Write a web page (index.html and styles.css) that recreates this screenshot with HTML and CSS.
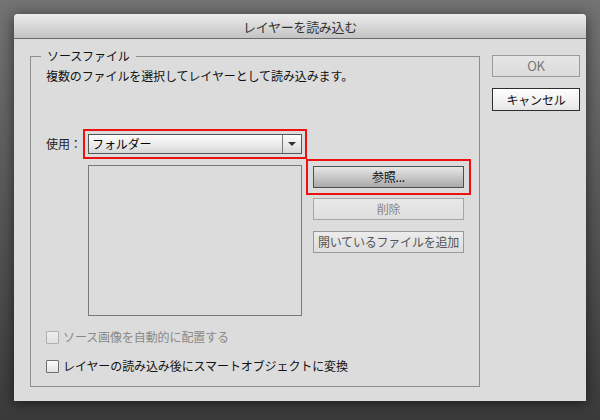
FILE: index.html
```html
<!DOCTYPE html>
<html lang="ja">
<head>
<meta charset="utf-8">
<title>レイヤーを読み込む</title>
<link rel="stylesheet" href="styles.css">
</head>
<body>
<div class="dialog">
  <div class="titlebar">レイヤーを読み込む</div>
  <div class="content">
    <fieldset class="group">
      <legend>ソースファイル</legend>
      <div class="group-body">
        <p class="desc">複数のファイルを選択してレイヤーとして読み込みます。</p>
        <div class="use-row">
          <span class="label">使用：</span>
          <div class="select highlight-sm">
            <span class="select-value">フォルダー</span>
            <span class="select-arrow"><span class="tri"></span></span>
          </div>
        </div>
        <div class="files">
          <div class="filelist"></div>
          <div class="file-buttons">
            <button class="btn btn-strong highlight-lg">参照...</button>
            <button class="btn btn-disabled btn-del">削除</button>
            <button class="btn btn-soft btn-add">開いているファイルを追加</button>
          </div>
        </div>
        <label class="check check-disabled"><span class="box"></span>ソース画像を自動的に配置する</label>
        <label class="check check-second"><span class="box"></span>レイヤーの読み込み後にスマートオブジェクトに変換</label>
      </div>
    </fieldset>
    <div class="actions">
      <button class="btn btn-ok">OK</button>
      <button class="btn btn-cancel">キャンセル</button>
    </div>
  </div>
</div>
</body>
</html>
```

FILE: styles.css
```css
html, body {
  margin: 0;
}
body {
  height: 420px;
  box-sizing: border-box;
  padding: 14px 14px 0;
  overflow: hidden;
  background: linear-gradient(#737373, #3a3a3a);
  font-family: "Noto Sans CJK JP", "Noto Sans", sans-serif;
  font-size: 12px;
  letter-spacing: -0.1px;
  color: #111;
}
.dialog {
  width: 572px;
  height: 387px;
  background: #dcdcdc;
  border-radius: 4px 4px 0 0;
  box-shadow: 0 2px 14px rgba(0, 0, 0, 0.55);
  display: flex;
  flex-direction: column;
}
.titlebar {
  height: 24px;
  line-height: 25px;
  border-bottom: 1px solid #6c6c6c;
  border-radius: 4px 4px 0 0;
  background: linear-gradient(#ececec, #c4c4c4);
  text-align: center;
  font-size: 13px;
  letter-spacing: -0.3px;
  color: #333;
}
.content {
  display: flex;
  align-items: flex-start;
  gap: 12px;
  padding: 9px 6px 0 16px;
}
.group {
  margin: 0;
  padding: 0;
  width: 450px;
  box-sizing: border-box;
  border: 1px solid #8e8e8e;
  min-width: 0;
}
.group legend {
  margin-left: 10px;
  padding: 0 6px;
  line-height: 16px;
  color: #111;
}
.group-body {
  padding: 4px 14px 12px 15px;
}
.desc {
  margin: 0;
  line-height: 16px;
}
.use-row {
  display: flex;
  align-items: center;
  margin-top: 50px;
}
.label {
  width: 42px;
  line-height: 16px;
  color: #222;
}
.select {
  width: 214px;
  height: 20px;
  box-sizing: border-box;
  border: 1px solid #555;
  background: linear-gradient(#fdfdfd, #e4e4e4 70%, #d6d6d6);
  display: flex;
  align-items: stretch;
}
.select-value {
  flex: 1;
  padding-left: 3px;
  line-height: 18px;
  color: #000;
}
.select-arrow {
  width: 18px;
  border-left: 1px solid #777;
  display: flex;
  align-items: center;
  justify-content: center;
}
.tri {
  width: 0;
  height: 0;
  border-left: 4px solid transparent;
  border-right: 4px solid transparent;
  border-top: 4px solid #333;
}
.highlight-sm {
  outline: 2px solid #ee1111;
  outline-offset: 3px;
}
.highlight-lg {
  outline: 2px solid #ee1111;
  outline-offset: 5px;
}
.files {
  display: flex;
  gap: 11px;
  margin-top: 11px;
  margin-left: 42px;
}
.filelist {
  width: 214px;
  height: 151px;
  box-sizing: border-box;
  border: 1px solid #7a7a7a;
}
.file-buttons {
  display: flex;
  flex-direction: column;
  padding-top: 1px;
}
.btn {
  display: block;
  box-sizing: border-box;
  height: 22px;
  padding: 0;
  font-family: inherit;
  font-size: 12px;
  letter-spacing: -0.2px;
  line-height: 20px;
  text-align: center;
  white-space: nowrap;
  cursor: default;
}
.file-buttons .btn {
  width: 151px;
}
.btn-strong {
  border: 1px solid #4e4e4e;
  background: linear-gradient(#e6e6e6, #c2c2c2 60%, #a9a9a9);
  color: #111;
}
.btn-disabled {
  border: 1px solid #a6a6a6;
  background: linear-gradient(#e8e8e8, #dedede);
  color: #888;
}
.btn-del {
  margin-top: 10px;
}
.btn-soft {
  border: 1px solid #999;
  background: linear-gradient(#ececec, #dedede);
  color: #555;
}
.btn-add {
  margin-top: 11px;
}
.check {
  display: flex;
  align-items: center;
  gap: 4px;
  line-height: 16px;
  color: #111;
}
.box {
  width: 13px;
  height: 13px;
  box-sizing: border-box;
  border: 1px solid #6e6e6e;
  border-radius: 1px;
  background: linear-gradient(#fbfbfb, #e2e2e2);
}
.check-disabled {
  margin-top: 13px;
  color: #888;
}
.check-disabled .box {
  border-color: #b0b0b0;
  background: linear-gradient(#eeeeee, #e2e2e2);
}
.check-second {
  margin-top: 13px;
}
.actions {
  width: 88px;
  display: flex;
  flex-direction: column;
  margin-top: 7px;
}
.btn-ok {
  width: 88px;
  border: 1px solid #9b9b9b;
  background: linear-gradient(#e6e6e6, #dadada);
  color: #777;
  font-size: 13px;
}
.btn-cancel {
  width: 88px;
  height: 23px;
  margin-top: 11px;
  border: 1px solid #2e2e2e;
  background: linear-gradient(#ffffff, #e6e6e6);
  color: #111;
}
```
